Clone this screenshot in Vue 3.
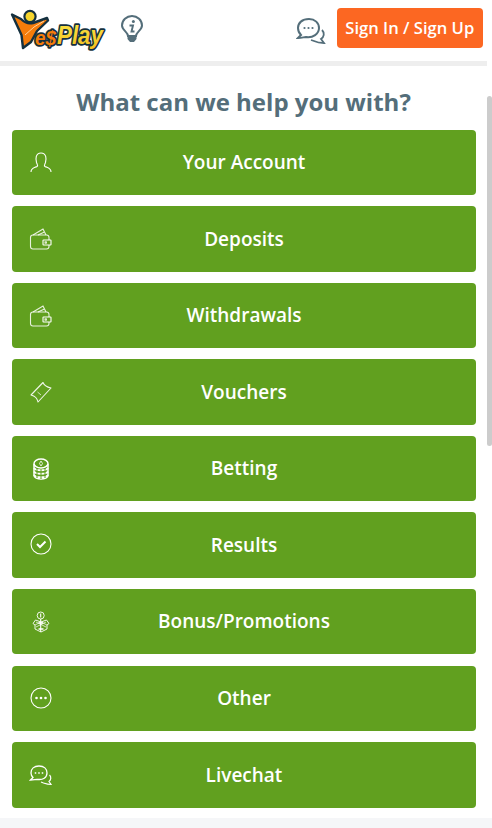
<script setup>
const items = [
  { label: 'Your Account', icon: 'user' },
  { label: 'Deposits', icon: 'wallet' },
  { label: 'Withdrawals', icon: 'wallet' },
  { label: 'Vouchers', icon: 'ticket' },
  { label: 'Betting', icon: 'chips' },
  { label: 'Results', icon: 'check' },
  { label: 'Bonus/Promotions', icon: 'bonus' },
  { label: 'Other', icon: 'dots' },
  { label: 'Livechat', icon: 'chat' }
]
</script>

<template>
  <div class="page">
    <header class="topbar">
      <svg class="logo" width="94" height="40" viewBox="0 0 94 40">
        <defs>
          <linearGradient id="playFill" x1="0" y1="0" x2="0" y2="1">
            <stop offset="0" stop-color="#fbe64a" />
            <stop offset="1" stop-color="#f3bf1c" />
          </linearGradient>
        </defs>
        <text class="logo-play" x="46" y="34" textLength="46" lengthAdjust="spacingAndGlyphs">Play</text>
        <text class="logo-e" x="24" y="35" textLength="21" lengthAdjust="spacingAndGlyphs">e$</text>
        <path d="M1 4.5 L10 9 C14 13 18 14 22 13 L36 8 L37 10.5 L26 21 L20 32 L12 38 L10.5 25 Z" fill="#f57c0a" stroke="#14303f" stroke-width="2.4" stroke-linejoin="round" />
        <path d="M14 25 L23 17 L33 11" fill="none" stroke="#ffd09a" stroke-width="1" />
        <circle cx="19" cy="6.5" r="5.6" fill="#f6d52e" stroke="#14303f" stroke-width="2.2" />
      </svg>
      <svg class="tip" width="24" height="28" viewBox="0 0 24 28">
        <path d="M8 21 C8 17 2 15 2 10.5 A10 9.5 0 0 1 22 10.5 C22 15 16 17 16 21 Z" fill="none" stroke="#546e7a" stroke-width="2" />
        <path d="M7.5 21 H16.5 V24 L14 27 H10 L7.5 24 Z" fill="#546e7a" />
        <circle cx="13.4" cy="6.5" r="1.5" fill="#546e7a" />
        <path d="M9.5 10.5 H13 L11.5 16.5 H14.5" fill="none" stroke="#546e7a" stroke-width="1.9" />
      </svg>
      <svg class="chat-top" width="30" height="28" viewBox="0 0 30 28">
        <path d="M13 2 C6 2 2 6 2 11 C2 14 3 16 5 18 L2 21 C6 21 8 20 10 20 C17 21 23 17 23 11 C23 6 19 2 13 2 Z" fill="none" stroke="#546e7a" stroke-width="2" />
        <path d="M26 13 C29 16 28 20 25 22 L28 26 C24 26 20 25 18 24 L15 23" fill="none" stroke="#546e7a" stroke-width="1.8" />
        <circle cx="8.5" cy="11" r="1.1" fill="#546e7a" /><circle cx="12.5" cy="11" r="1.1" fill="#546e7a" /><circle cx="16.5" cy="11" r="1.1" fill="#546e7a" />
      </svg>
      <button class="signin">Sign In / Sign Up</button>
    </header>
    <div class="divider"></div>

    <main class="help">
      <h1 class="title">What can we help you with?</h1>
      <ul class="topics">
        <li v-for="item in items" :key="item.label" class="topic">
          <svg class="topic-icon" width="24" height="24" viewBox="0 0 24 24" fill="none" stroke="#fff" stroke-width="1.1">
            <template v-if="item.icon === 'user'">
              <path d="M2 22 C2 18 5 18 8 16.5 C9.5 15.5 8 14 7.5 12.5 C6.5 9 6.5 3 12 3 C17.5 3 17.5 9 16.5 12.5 C16 14 14.5 15.5 16 16.5 C19 18 22 18 22 22" />
            </template>
            <template v-else-if="item.icon === 'wallet'">
              <rect x="1.5" y="9" width="18.5" height="14" rx="2.5" stroke-opacity=".85" />
              <path d="M4 9 L14 3 L17 9 M9 9 L15.5 6" stroke-opacity=".85" />
              <rect x="14" y="14" width="8" height="5" rx=".6" fill="#61a01f" />
              <rect x="16" y="15.8" width="1.5" height="1.4" stroke-width=".8" />
            </template>
            <template v-else-if="item.icon === 'ticket'">
              <path d="M14 3.5 Q15.5 7.5 22 9 L9 23 Q8 17.5 2 16 Z" stroke-linejoin="round" stroke-opacity=".9" />
              <path d="M8.5 13 L12 16" stroke-width=".7" />
            </template>
            <template v-else-if="item.icon === 'chips'">
              <ellipse cx="12" cy="7.5" rx="7" ry="4.5" stroke-width="1.5" />
              <path d="M5 8 V19.5 C5 21.5 8.5 23 12 23 C15.5 23 19 21.5 19 19.5 V8" stroke-width="1.5" />
              <path d="M5 12 C7 15 17 15 19 12 M5 15.5 C7 18.5 17 18.5 19 15.5 M5 19 C7 22 17 22 19 19" stroke-width="1.8" />
              <path d="M8 12 V22 M12 13 V23 M16 12 V22" stroke="#61a01f" stroke-width="1" />
              <path d="M12 5 L13.5 7.5 L12 10 L10.5 7.5 Z" stroke-width=".8" />
            </template>
            <template v-else-if="item.icon === 'check'">
              <circle cx="12" cy="12" r="10" />
              <path d="M8 12 L11 15 L16.5 9.5" stroke-width="2" />
            </template>
            <template v-else-if="item.icon === 'bonus'">
              <circle cx="11.7" cy="6.5" r="3.5" stroke-width=".9" />
              <path d="M11.7 4.5 V8.5 M11.7 10 V23" />
              <path d="M12 13 L6.5 11 L4 14.5 L6 16 V20 L12 23 L18 20 V16 L20 14.5 L17.5 11 Z" stroke-linejoin="round" stroke-width=".9" />
              <path d="M6 16 L12 13 L18 16 M7 13 L17 18 M17 13 L7 18" stroke-width=".7" />
              <path d="M9.5 14 H14 M9.5 20 H14.5" stroke-width="1.6" />
            </template>
            <template v-else-if="item.icon === 'dots'">
              <circle cx="12" cy="12" r="10" />
              <g fill="#fff" stroke="none">
                <circle cx="7.5" cy="12" r="1.3" /><circle cx="12" cy="12" r="1.3" /><circle cx="16.5" cy="12" r="1.3" />
              </g>
            </template>
            <template v-else>
              <path d="M10 4 C5 4 2 7 2 11 C2 13 3 14.5 4 15.5 L1.5 18 C4.5 18 6.5 17.3 8 17.3 C14 18.3 18 15.5 18 11 C18 7 15 4 10 4 Z" stroke-width="1.3" />
              <path d="M20.5 13 C22.5 15 22 18 20 19.5 L22 22.5 C19 22.5 16 21.5 14.5 21 L12 20" stroke-width="1.2" />
              <g fill="#fff" stroke="none" fill-opacity=".85">
                <circle cx="6.5" cy="11" r=".9" /><circle cx="10" cy="11" r=".9" /><circle cx="13.5" cy="11" r=".9" />
              </g>
            </template>
          </svg>
          <span class="topic-label">{{ item.label }}</span>
        </li>
      </ul>
    </main>
    <div class="footer-strip"></div>
    <div class="scroll-thumb"></div>
  </div>
</template>

<style>
html, body {
  margin: 0;
  background: #fff;
  overflow: hidden;
}
</style>

<style scoped>
.page {
  position: relative;
  width: 492px;
  height: 828px;
  overflow: hidden;
  background: #fff;
  font-family: 'Open Sans', sans-serif;
}

.topbar {
  height: 61px;
  box-sizing: border-box;
  display: flex;
  align-items: center;
  padding: 0 9.5px 0 11px;
}

.logo {
  margin-top: -1px;
  overflow: visible;
}

.logo-e,
.logo-play {
  font-family: 'Liberation Sans', sans-serif;
  font-weight: 700;
  font-style: italic;
  font-size: 26px;
  paint-order: stroke;
  stroke: #14303f;
  stroke-width: 3.6px;
  stroke-linejoin: round;
}

.logo-e {
  fill: #f57c0a;
  font-size: 21px;
}

.logo-play {
  fill: url(#playFill);
}

.tip {
  margin: -3px 0 0 15px;
}

.chat-top {
  margin: 0 11px 0 auto;
}

.signin {
  width: 145.5px;
  height: 40px;
  margin-top: -6px;
  padding: 0;
  border: none;
  border-radius: 4px;
  background: #fc6722;
  color: #fff;
  font-family: inherit;
  font-size: 16.6px;
  font-weight: 600;
}

.divider {
  width: 487px;
  height: 5px;
  background: #eee;
}

.help {
  padding-top: 21px;
}

.title {
  margin: 0 0 12.7px;
  padding-right: 5px;
  font-size: 24px;
  line-height: 30px;
  font-weight: 700;
  color: #546e7a;
  text-align: center;
}

.topics {
  list-style: none;
  margin: 0;
  padding: 0 16px 0 12px;
  display: flex;
  flex-direction: column;
  gap: 11.05px;
}

.topic {
  height: 65.5px;
  display: flex;
  align-items: center;
  position: relative;
  border-radius: 4px;
  background: #61a01f;
  color: #fff;
}

.topic-icon {
  position: absolute;
  left: 17px;
  top: 20px;
}

.topic-label {
  flex: 1;
  padding-bottom: .6px;
  text-align: center;
  font-size: 19px;
  font-weight: 600;
}

.footer-strip {
  position: absolute;
  left: 0;
  right: 0;
  bottom: 0;
  height: 10px;
  background: #f5f6f8;
}

.scroll-thumb {
  position: absolute;
  right: 0;
  top: 96px;
  width: 5px;
  height: 350px;
  border-radius: 3px;
  background: #ccc;
}
</style>
